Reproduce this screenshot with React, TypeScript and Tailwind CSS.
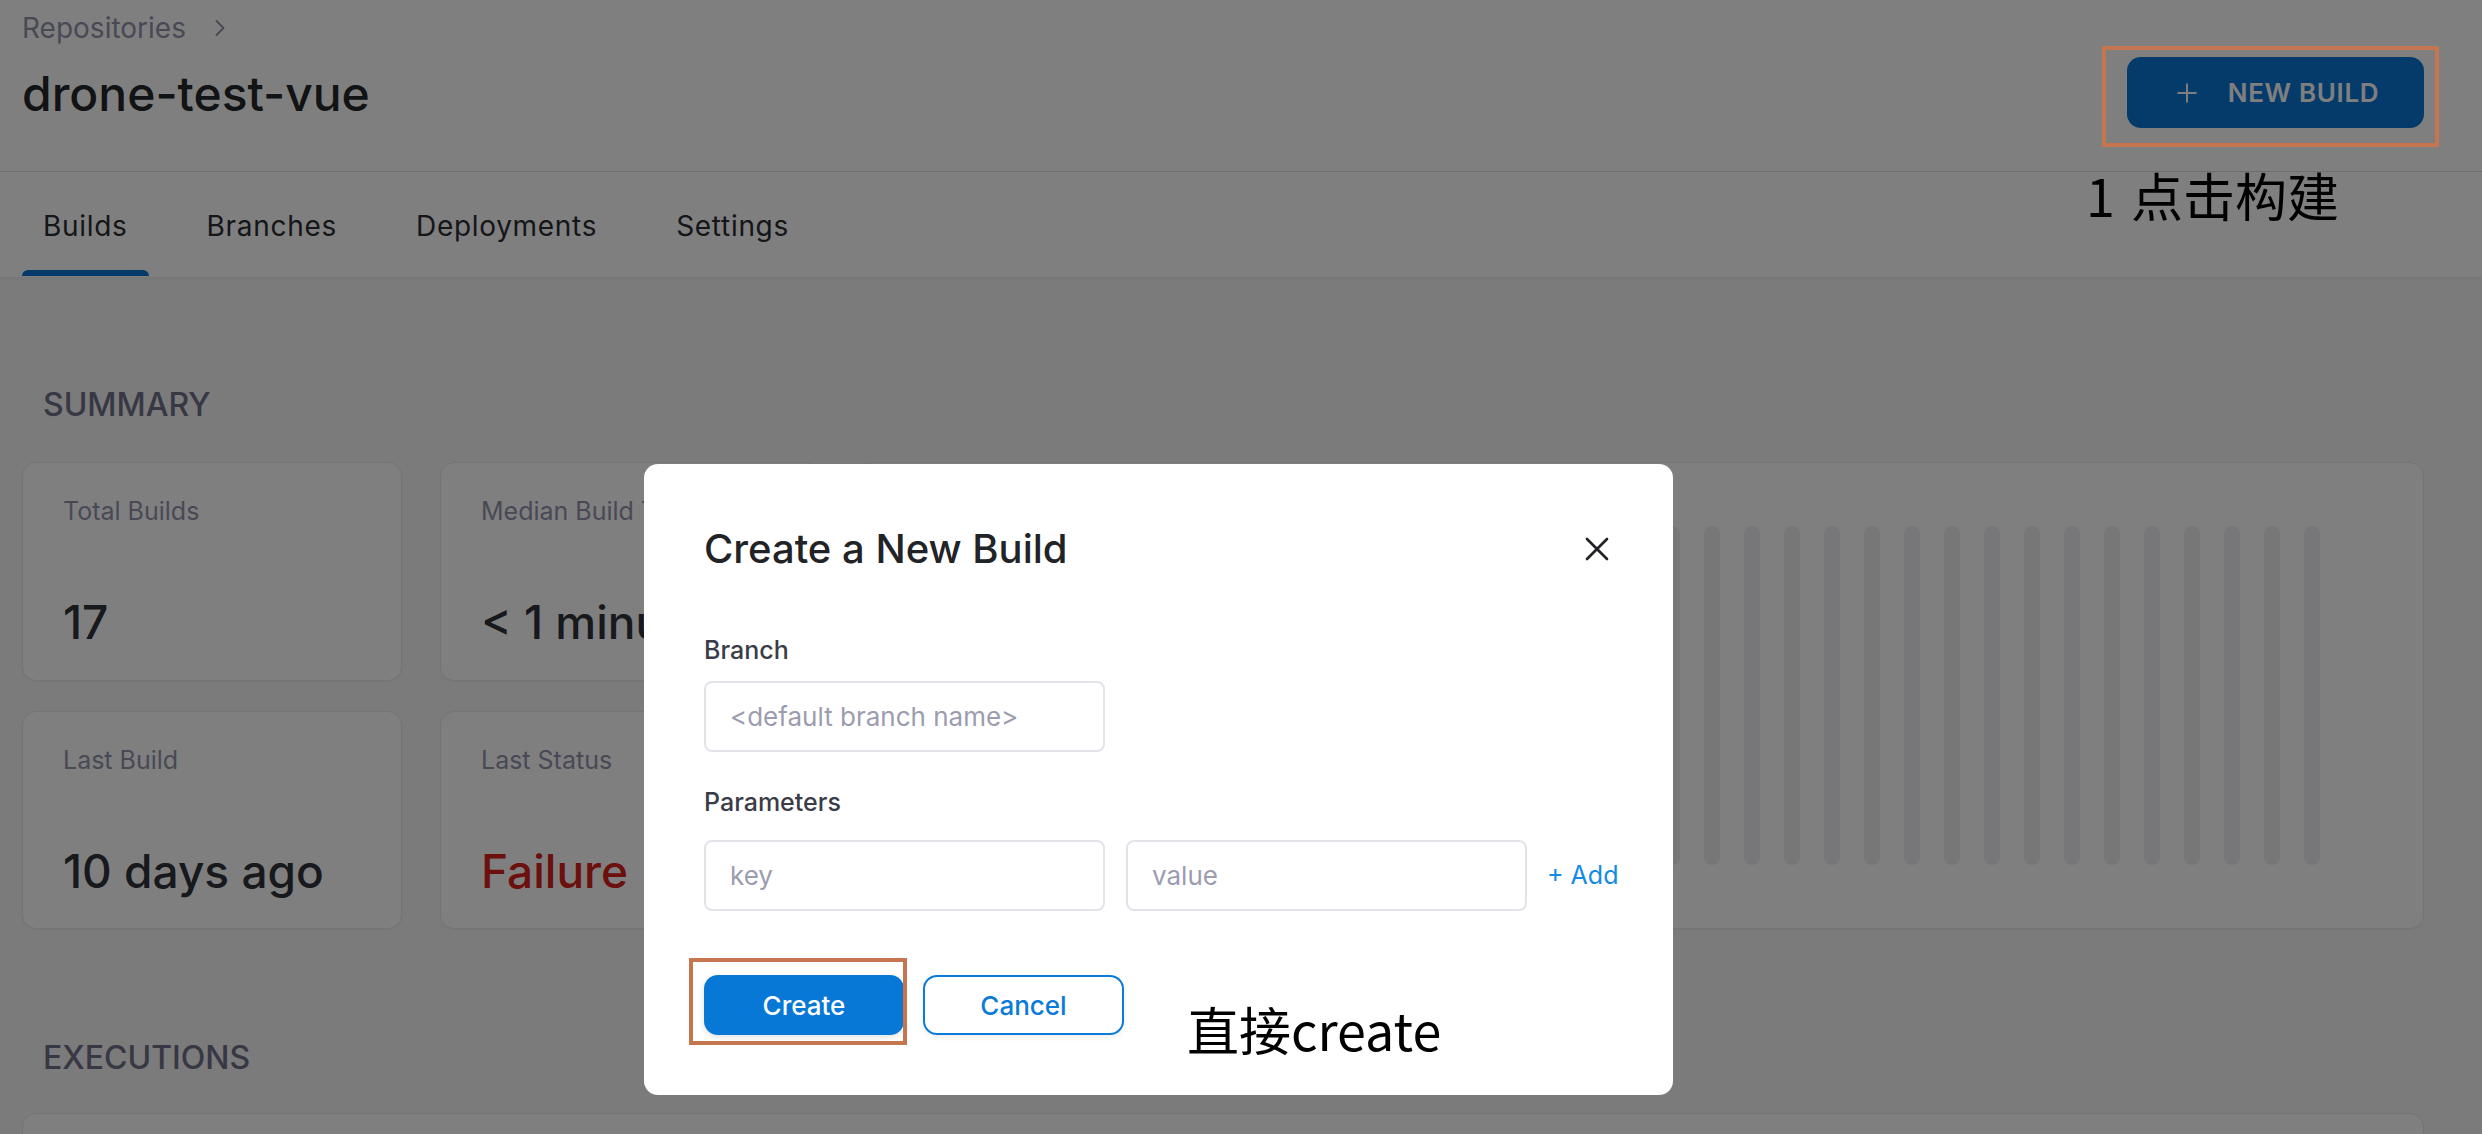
import { X, Plus, ChevronRight } from "lucide-react";

const TABS = ["Builds", "Branches", "Deployments", "Settings"] as const;
const BAR_COUNT = 36;

function StatCard({
  label,
  value,
  valueClass,
}: {
  label: string;
  value: string;
  valueClass?: string;
}) {
  return (
    <div className="flex h-full flex-col rounded-[14px] border border-[#e9e9ee] bg-white px-[40px] pt-[33px] shadow-[0_1px_2px_rgba(0,0,0,0.04)]">
      <div className="text-[25px] leading-[30px] text-[#9293ab]">{label}</div>
      <div
        className={
          "mt-[68px] text-[46px] font-medium leading-[56px] " +
          (valueClass ?? "text-[#30323b]")
        }
      >
        {value}
      </div>
    </div>
  );
}

function Field({ placeholder, className }: { placeholder: string; className?: string }) {
  return (
    <input
      placeholder={placeholder}
      className={
        "h-[71px] w-[401px] shrink-0 rounded-[8px] border-2 border-[#e3e3ea] bg-white px-[24px] text-[26px] text-[#2b2d36] outline-none placeholder:text-[#9c9cb0] " +
        (className ?? "")
      }
    />
  );
}

export default function App() {
  return (
    <div className="relative h-[1134px] w-[2482px] overflow-hidden bg-[#f6f6f7] font-['Inter','Noto_Sans',sans-serif]">
      {/* header */}
      <header className="flex h-[172px] items-start justify-between border-b border-[#dcdcdf] bg-white pl-[22px] pr-[58px]">
        <div className="pt-[12px]">
          <div className="flex items-center gap-[20px] text-[28px] leading-[32px] text-[#9293ab]">
            <span>Repositories</span>
            <ChevronRight className="h-[28px] w-[28px]" strokeWidth={1.6} />
          </div>
          <h1 className="mt-[21px] text-[48px] font-medium leading-[58px] text-[#25262b]">
            drone-test-vue
          </h1>
        </div>
        <button
          type="button"
          className="mt-[57px] flex h-[71px] w-[297px] items-center justify-center gap-[26px] rounded-[14px] bg-[#0a76d4] text-[26px] font-semibold tracking-wide text-white"
        >
          <Plus className="h-[30px] w-[30px]" strokeWidth={1.6} />
          NEW BUILD
        </button>
      </header>

      {/* tabs */}
      <nav className="flex h-[105px] gap-[37px] bg-white pl-[22px] shadow-[0_2px_4px_rgba(0,0,0,0.04)]">
        {TABS.map((tab, i) => (
          <div
            key={tab}
            className="relative flex h-full items-center px-[21px] pt-[2px] text-[28px] tracking-[0.025em] text-[#2b2c33]"
          >
            {tab}
            {i === 0 && (
              <span className="absolute bottom-[1px] left-0 right-0 h-[6px] rounded-t-[6px] bg-[#0a76d4]" />
            )}
          </div>
        ))}
      </nav>

      {/* content */}
      <main className="pl-[22px] pr-[58px]">
        <h2 className="ml-[21px] mt-[108px] text-[32px] font-medium leading-[39px] text-[#6e7088]">
          SUMMARY
        </h2>
        <div className="mt-[38px] grid h-[467px] grid-cols-[380px_380px_1fr] grid-rows-[219px_218px] gap-x-[38px] gap-y-[30px]">
          <StatCard label="Total Builds" value="17" />
          <StatCard label="Median Build Time" value="< 1 minute" />
          <div className="row-span-2 flex items-center gap-[24px] rounded-[14px] border border-[#e9e9ee] bg-white pl-[45px] shadow-[0_1px_2px_rgba(0,0,0,0.04)]">
            {Array.from({ length: BAR_COUNT }).map((_, i) => (
              <span key={i} className="h-[339px] w-[16px] rounded-full bg-[#eeeef3]" />
            ))}
          </div>
          <StatCard label="Last Build" value="10 days ago" />
          <StatCard label="Last Status" value="Failure" valueClass="text-[#d8201a]" />
        </div>
        <h2 className="ml-[21px] mt-[109px] text-[32px] font-medium leading-[39px] text-[#6e7088]">
          EXECUTIONS
        </h2>
        <div className="mt-[36px] h-[200px] rounded-[14px] border border-[#e9e9ee] bg-white" />
      </main>

      {/* backdrop */}
      <div className="absolute inset-0 bg-black/50" />

      {/* modal */}
      <div className="absolute left-[644px] top-[464px] h-[631px] w-[1029px] rounded-[14px] bg-white px-[60px] pt-[61px]">
        <div className="flex items-center justify-between">
          <h3 className="text-[40px] font-medium leading-[48px] text-[#222327]">
            Create a New Build
          </h3>
          <X className="mr-[-4px] h-[40px] w-[40px] text-[#222327]" strokeWidth={1.6} />
        </div>
        <div className="mt-[62px] text-[25px] font-medium leading-[30px] text-[#3a3c48]">Branch</div>
        <Field placeholder="<default branch name>" className="mt-[16px]" />
        <div className="mt-[35px] text-[25px] font-medium leading-[30px] text-[#3a3c48]">Parameters</div>
        <div className="mt-[23px] flex items-center">
          <Field placeholder="key" />
          <Field placeholder="value" className="ml-[21px] w-[398px]" />
          <span className="ml-[20px] whitespace-nowrap text-[25px] text-[#138be4]">+ Add</span>
        </div>
        <div className="mt-[64px] flex gap-[19px]">
          <button
            type="button"
            className="h-[60px] w-[200px] rounded-[14px] bg-[#0878d6] text-[26px] font-medium text-white shadow-[0_2px_6px_rgba(0,0,0,0.12)]"
          >
            Create
          </button>
          <button
            type="button"
            className="h-[60px] w-[201px] rounded-[14px] border-2 border-[#0a7bd8] bg-white text-[26px] font-medium text-[#0a7bd8] shadow-[0_2px_6px_rgba(0,0,0,0.08)]"
          >
            Cancel
          </button>
        </div>
      </div>

      {/* annotations */}
      <div className="absolute left-[2102px] top-[46px] h-[101px] w-[337px] border-4 border-[#c6764f]" />
      <div className="absolute left-[2086px] top-[162px] text-[52px] leading-[66px] text-black font-['Noto_Sans_CJK_SC',sans-serif]">
        <span className="mr-[16px]">1</span>点击构建
      </div>
      <div className="absolute left-[689px] top-[958px] h-[87px] w-[218px] border-4 border-[#c6764f]" />
      <div className="absolute left-[1187px] top-[996px] text-[52px] leading-[66px] text-black font-['Noto_Sans_CJK_SC',sans-serif]">
        直接create
      </div>
    </div>
  );
}
